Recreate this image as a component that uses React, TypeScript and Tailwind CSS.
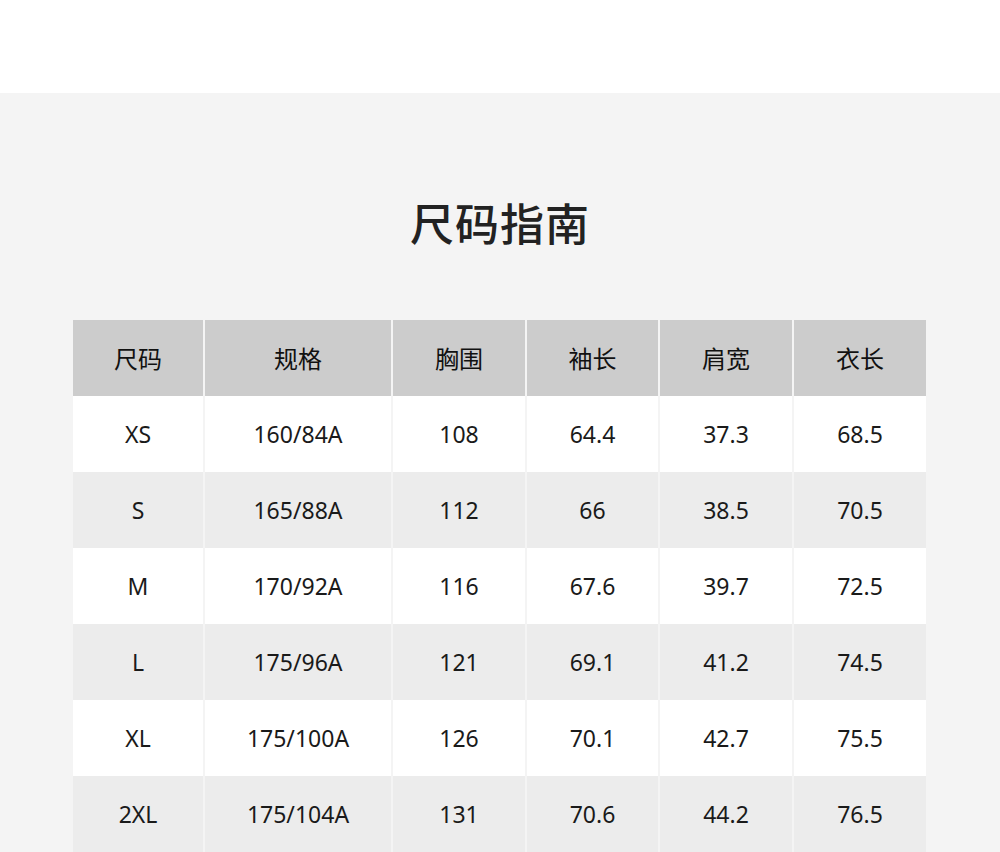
import React from "react";

const headers = ["尺码", "规格", "胸围", "袖长", "肩宽", "衣长"];
const rows = [
  ["XS", "160/84A", "108", "64.4", "37.3", "68.5"],
  ["S", "165/88A", "112", "66", "38.5", "70.5"],
  ["M", "170/92A", "116", "67.6", "39.7", "72.5"],
  ["L", "175/96A", "121", "69.1", "41.2", "74.5"],
  ["XL", "175/100A", "126", "70.1", "42.7", "75.5"],
  ["2XL", "175/104A", "131", "70.6", "44.2", "76.5"],
];

const font = { fontFamily: '"Noto Sans", "Noto Sans CJK SC", sans-serif' };

export default function App() {
  return (
    <div className="w-[1000px] h-[852px] overflow-hidden bg-white" style={font}>
      <div className="h-[93px] bg-white" />
      <div className="bg-[#f4f4f4] pt-[99px] pb-10">
        <h1
          className="text-center text-[44px] leading-[60px] font-medium text-[#222222] tracking-[1px]"
          style={{ fontFamily: '"Noto Sans CJK SC", sans-serif' }}
        >
          尺码指南
        </h1>
        <div className="mt-[68px] ml-[73px] grid grid-cols-[130px_186px_132px_131px_132px_132px] gap-x-[2px] w-[853px]">
          {headers.map((h) => (
            <div
              key={h}
              className="h-[76px] bg-[#cccccc] flex items-center justify-center text-[24px] text-[#111111]"
              style={{ fontFamily: '"Noto Sans CJK SC", sans-serif' }}
            >
              {h}
            </div>
          ))}
          {rows.map((r, i) =>
            r.map((c, j) => (
              <div
                key={`${i}-${j}`}
                className={`h-[76px] flex items-center justify-center text-[23px] text-[#1a1a1a] ${
                  i % 2 === 0 ? "bg-white" : "bg-[#ececec]"
                }`}
              >
                {c}
              </div>
            ))
          )}
        </div>
      </div>
    </div>
  );
}
